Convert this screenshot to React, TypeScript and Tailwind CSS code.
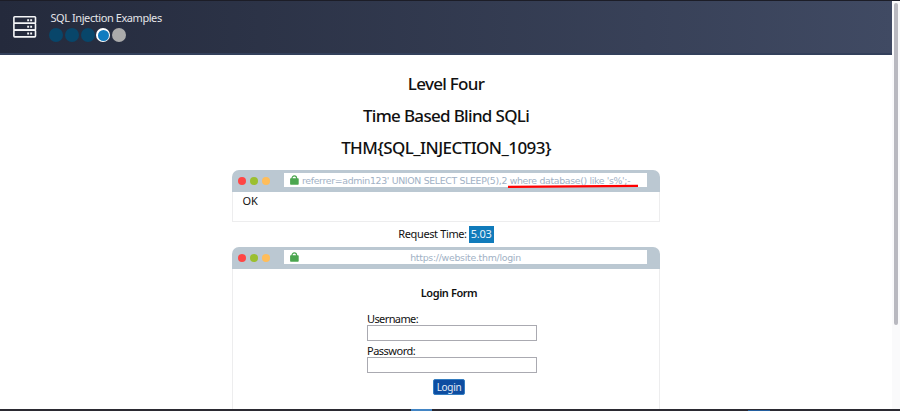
import type { ReactNode } from "react";

function ServerIcon() {
  return (
    <svg width="24" height="24" viewBox="0 0 24 24" fill="none" stroke="#f4f5f7" strokeWidth="1.6">
      <rect x="0.9" y="1.7" width="21.6" height="6.6" rx="0.8" />
      <rect x="0.9" y="8.3" width="21.6" height="6.8" rx="0.8" />
      <rect x="0.9" y="15.1" width="21.6" height="6.8" rx="0.8" />
      <path d="M14.2 5.2h1.9M17.2 5.2h1.9M14.2 11.8h1.9M17.2 11.8h1.9M14.2 18.5h1.9M17.2 18.5h1.9" strokeWidth="2" />
    </svg>
  );
}

function LockIcon() {
  return (
    <svg className="shrink-0" width="9" height="11" viewBox="0 0 9 11">
      <path d="M2 5V3.2a2.3 2.3 0 0 1 4.6 0V5" fill="none" stroke="#4ba64f" strokeWidth="1.2" />
      <rect x="0.1" y="3.2" width="8.6" height="6.5" rx="0.7" fill="#4ba64f" />
    </svg>
  );
}

function BrowserWindow({ address, children, className }: { address: ReactNode; children: ReactNode; className: string }) {
  return (
    <section className={`flex w-[428px] flex-col ${className}`}>
      <div className="flex h-[22px] shrink-0 items-start rounded-t-[7px] bg-[#bbc8d2] pl-[6px]">
        <div className="flex gap-[4px] pt-[7px]">
          <i className="size-[8px] rounded-full bg-[#ff4645]" />
          <i className="size-[8px] rounded-full bg-[#9bbf30]" />
          <i className="size-[8px] rounded-full bg-[#ffbd5a]" />
        </div>
        <div className="mt-[3px] ml-[14px] flex h-[14px] w-[363px] bg-white pt-[2px] pl-[6px] font-['DejaVu_Sans',sans-serif] text-[9.4px] leading-[12px] text-[#a1b1c5]">
          <LockIcon />
          {address}
        </div>
      </div>
      <div className="flex-1 border border-t-0 border-[#ededee]">{children}</div>
    </section>
  );
}

export default function App() {
  return (
    <div className="flex h-[411px] w-[900px] flex-col overflow-hidden bg-white font-['Noto_Sans','Open_Sans',sans-serif] text-[#111]">
      <div className="h-px shrink-0 bg-[#1c1d27]" />
      <div className="flex h-[408px] shrink-0">
        <div className="flex w-[892px] flex-col">
          <header className="flex h-[54px] shrink-0 border-b-2 border-[#33405b] bg-linear-to-r from-[#242a3c] to-[#404a63] pl-[13px]">
            <div className="pt-[14px]"><ServerIcon /></div>
            <div className="ml-[12px] flex flex-col pt-[9px]">
              <div className="h-[16px] pl-[1.5px] text-[11px] leading-[16px] tracking-[-0.43px] whitespace-nowrap text-[#e4e5e9]">SQL Injection Examples</div>
              <div className="flex gap-[1.8px] pt-[2px]">
                <i className="size-[14px] rounded-full bg-[#08466a]" />
                <i className="size-[14px] rounded-full bg-[#08466a]" />
                <i className="size-[14px] rounded-full bg-[#08466a]" />
                <i className="flex size-[14px] rounded-full bg-white p-[1.5px]">
                  <i className="flex-1 rounded-full bg-[#107cc0]" />
                </i>
                <i className="size-[14px] rounded-full bg-[#ababab]" />
              </div>
            </div>
          </header>
          <main className="flex min-h-0 flex-1 flex-col items-center">
            <h1 className="mt-[17px] h-[24px] text-[17px] leading-[24px] font-medium tracking-[-0.7px]">Level Four</h1>
            <h1 className="mt-[8px] h-[24px] text-[17px] leading-[24px] font-medium tracking-[-0.68px]">Time Based Blind SQLi</h1>
            <h1 className="mt-[8px] h-[24px] text-[17px] leading-[24px] font-medium tracking-[-0.57px]">THM&#123;SQL_INJECTION_1093&#125;</h1>
            <BrowserWindow
              className="mt-[10px] h-[52px] shrink-0"
              address={
                <div className="relative ml-[3px] h-[12px] w-[335px] tracking-[-0.34px] whitespace-nowrap">
                  <span>referrer=admin123' UNION SELECT SLEEP(5),2 where database() like 's%';-</span>
                  <svg className="absolute top-[8px] left-[205px]" width="132" height="5" viewBox="0 0 132 5">
                    <path d="M1 3.9L131 2.9" stroke="#ff0000" strokeWidth="2.2" />
                  </svg>
                </div>
              }
            >
              <p className="pt-px pl-[9.5px] text-[11px] leading-[16px]">OK</p>
            </BrowserWindow>
            <div className="mt-[4px] flex h-[17px] shrink-0 items-start gap-[2px] text-[11px] leading-[16px] whitespace-nowrap">
              <span className="tracking-[-0.38px]">Request Time:</span>
              <span className="h-[17px] w-[25px] bg-[#107bbb] text-center tracking-[-0.2px] text-[#e8f3fa]">5.03</span>
            </div>
            <BrowserWindow className="mt-[4px] h-[164px] shrink-0" address={<span className="flex-1 pr-[15px] text-center tracking-[-0.28px]">https://website.thm/login</span>}>
              <form className="flex flex-col items-center pt-[16px] pl-[6px] text-[11px] leading-[14px]" onSubmit={(event) => event.preventDefault()}>
                <h2 className="h-[16px] text-[11px] leading-[16px] font-semibold tracking-[-0.42px]">Login Form</h2>
                <div className="mt-[11px] ml-[6px] flex w-[170px] flex-col">
                  <label htmlFor="username" className="h-[13px] tracking-[-0.6px]">Username:</label>
                  <input id="username" className="h-[16px] border border-[#aaaab1] bg-white" />
                  <label htmlFor="password" className="mt-[3px] h-[13px] tracking-[-0.5px]">Password:</label>
                  <input id="password" className="h-[16px] border border-[#aaaab1] bg-white" />
                </div>
                <button className="mt-[6px] h-[16px] w-[32px] rounded-[2px] border border-[#337dc1] bg-[#0d4da1] text-[10px] leading-[13px] tracking-[-0.3px] text-[#e3ebf5]">Login</button>
              </form>
            </BrowserWindow>
          </main>
        </div>
        <div className="w-[8px] bg-[#fafafb] pt-[2px] pl-[2px]">
          <div className="h-[322px] w-[4px] rounded-full bg-[#b9b9c0]" />
        </div>
      </div>
      <div className="flex h-[2px] shrink-0 bg-[#2b2a32]">
        <div className="ml-[411px] h-[2px] w-[21px] bg-[#4385c4]" />
        <div className="mt-px ml-[316px] h-px w-[22px] bg-[#2460a0]" />
      </div>
    </div>
  );
}
